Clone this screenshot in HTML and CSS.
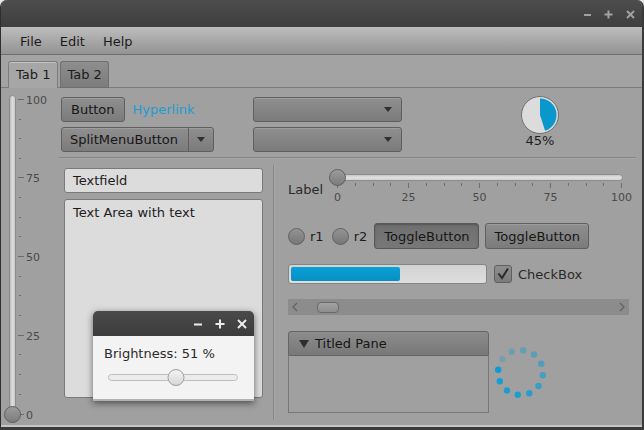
FILE: index.html
```html
<!DOCTYPE html>
<html>
<head>
<meta charset="utf-8">
<link rel="stylesheet" href="styles.css">
</head>
<body>
<div class="window">
  <div class="titlebar">
    <svg class="wctl" width="60" height="27" viewBox="0 0 60 27">
      <g stroke="#a2a2a2" stroke-width="2" fill="none">
        <line x1="3" y1="15" x2="10" y2="15"/>
        <line x1="23.5" y1="14.5" x2="31.5" y2="14.5"/><line x1="27.5" y1="10.5" x2="27.5" y2="18.5"/>
        <line x1="46" y1="11" x2="53" y2="18"/><line x1="53" y1="11" x2="46" y2="18"/>
      </g>
    </svg>
  </div>
  <div class="menubar">
    <span class="menu">File</span><span class="menu">Edit</span><span class="menu">Help</span>
  </div>
  <div class="tabbar">
    <div class="tab sel">Tab 1</div>
    <div class="tab t2">Tab 2</div>
  </div>
  <div class="content">
    <div class="vslider">
      <svg width="60" height="337" viewBox="0 0 60 337">
        <defs>
          <linearGradient id="vtrack" x1="0" y1="0" x2="1" y2="0">
            <stop offset="0" stop-color="#b4b4b4"/><stop offset="0.5" stop-color="#dedede"/><stop offset="1" stop-color="#c4c4c4"/>
          </linearGradient>
          <linearGradient id="thumb" x1="0" y1="0" x2="0" y2="1">
            <stop offset="0" stop-color="#9c9c9c"/><stop offset="1" stop-color="#7b7b7b"/>
          </linearGradient>
        </defs>
        <rect x="8.5" y="7.5" width="6" height="318" rx="3" fill="url(#vtrack)" stroke="#8c8c8c"/>
        <g stroke="#6c6c6c" stroke-width="1">
          <line x1="17" y1="11.5" x2="23" y2="11.5"/>
          <line x1="18" y1="31.5" x2="20" y2="31.5"/>
          <line x1="18" y1="50.5" x2="20" y2="50.5"/>
          <line x1="18" y1="70.5" x2="20" y2="70.5"/>
          <line x1="17" y1="89.5" x2="23" y2="89.5"/>
          <line x1="18" y1="109.5" x2="20" y2="109.5"/>
          <line x1="18" y1="129.5" x2="20" y2="129.5"/>
          <line x1="18" y1="148.5" x2="20" y2="148.5"/>
          <line x1="17" y1="168.5" x2="23" y2="168.5"/>
          <line x1="18" y1="188.5" x2="20" y2="188.5"/>
          <line x1="18" y1="207.5" x2="20" y2="207.5"/>
          <line x1="18" y1="227.5" x2="20" y2="227.5"/>
          <line x1="17" y1="247.5" x2="23" y2="247.5"/>
          <line x1="18" y1="266.5" x2="20" y2="266.5"/>
          <line x1="18" y1="286.5" x2="20" y2="286.5"/>
          <line x1="18" y1="306.5" x2="20" y2="306.5"/>
          <line x1="17" y1="326.5" x2="23" y2="326.5"/>
        </g>
        <g class="ticklabel">
          <text x="25" y="15.5">100</text>
          <text x="25" y="94">75</text>
          <text x="25" y="172.5">50</text>
          <text x="25" y="251.5">25</text>
          <text x="25" y="330.5">0</text>
        </g>
        <circle cx="11.5" cy="326.5" r="8" fill="url(#thumb)" stroke="#5f5f5f"/>
      </svg>
    </div>

    <div class="main">
      <div class="toprow">
        <div class="colA">
          <div class="rowA">
            <div class="btn">Button</div>
            <span class="link">Hyperlink</span>
          </div>
          <div class="split">
            <div class="split-main">SplitMenuButton</div>
            <div class="split-arrow"><i class="caret"></i></div>
          </div>
        </div>
        <div class="colB">
          <div class="combo"><i class="caret"></i></div>
          <div class="combo"><i class="caret"></i></div>
        </div>
        <div class="colC">
          <svg width="40" height="40" viewBox="0 0 40 40">
            <circle cx="20" cy="19" r="18.5" fill="#dcdcdc" stroke="#707070"/>
            <path d="M20 19 L20 2.5 A16.5 16.5 0 0 1 25.1 34.7 Z" fill="#0a98cc"/>
          </svg>
          <div class="pct">45%</div>
        </div>
      </div>
      <div class="hsep"></div>
      <div class="bottom">
        <div class="leftcol">
          <div class="textfield">Textfield</div>
          <div class="textarea">Text Area with text</div>
        </div>
        <div class="vsep"></div>
        <div class="rightcol">
          <div class="r-slider">
            <span class="lbl">Label</span>
            <svg class="hslider" width="308" height="36" viewBox="0 0 308 36">
              <defs>
                <linearGradient id="htrack" x1="0" y1="0" x2="0" y2="1">
                  <stop offset="0" stop-color="#c0c0c0"/><stop offset="0.5" stop-color="#e0e0e0"/><stop offset="1" stop-color="#cfcfcf"/>
                </linearGradient>
                <linearGradient id="thumb2" x1="0" y1="0" x2="0" y2="1">
                  <stop offset="0" stop-color="#9c9c9c"/><stop offset="1" stop-color="#7b7b7b"/>
                </linearGradient>
              </defs>
              <rect x="2.5" y="6.5" width="292" height="6" rx="3" fill="url(#htrack)" stroke="#8c8c8c"/>
              <g stroke="#6c6c6c" stroke-width="1">
                <line x1="9.5" y1="15" x2="9.5" y2="20"/>
                <line x1="27.5" y1="15" x2="27.5" y2="18"/>
                <line x1="45.5" y1="15" x2="45.5" y2="18"/>
                <line x1="62.5" y1="15" x2="62.5" y2="18"/>
                <line x1="80.5" y1="15" x2="80.5" y2="20"/>
                <line x1="98.5" y1="15" x2="98.5" y2="18"/>
                <line x1="116.5" y1="15" x2="116.5" y2="18"/>
                <line x1="133.5" y1="15" x2="133.5" y2="18"/>
                <line x1="151.5" y1="15" x2="151.5" y2="20"/>
                <line x1="169.5" y1="15" x2="169.5" y2="18"/>
                <line x1="187.5" y1="15" x2="187.5" y2="18"/>
                <line x1="204.5" y1="15" x2="204.5" y2="18"/>
                <line x1="222.5" y1="15" x2="222.5" y2="20"/>
                <line x1="240.5" y1="15" x2="240.5" y2="18"/>
                <line x1="258.5" y1="15" x2="258.5" y2="18"/>
                <line x1="275.5" y1="15" x2="275.5" y2="18"/>
                <line x1="293.5" y1="15" x2="293.5" y2="20"/>
              </g>
              <g class="ticklabel" text-anchor="middle">
                <text x="9.5" y="33">0</text>
                <text x="80.5" y="33">25</text>
                <text x="151.5" y="33">50</text>
                <text x="222.5" y="33">75</text>
                <text x="293.5" y="33">100</text>
              </g>
              <circle cx="9.5" cy="9.5" r="8" fill="url(#thumb2)" stroke="#5f5f5f"/>
            </svg>
          </div>

          <div class="r-toggles">
            <span class="radio"></span><span class="rlbl">r1</span>
            <span class="radio"></span><span class="rlbl r2">r2</span>
            <div class="btn toggle on">ToggleButton</div>
            <div class="btn toggle">ToggleButton</div>
          </div>

          <div class="r-progress">
            <div class="pbar"><div class="pfill" style="width:109px"></div></div>
            <div class="check">
              <svg width="14" height="14" viewBox="0 0 14 14"><path d="M2.5 6.5 L6 11 L12 1.5" fill="none" stroke="#2a2a2a" stroke-width="2"/></svg>
            </div>
            <span class="chklbl">CheckBox</span>
          </div>

          <div class="scrollbar">
            <svg class="sarrow" width="8" height="10" viewBox="0 0 8 10"><path d="M6 1 L2 5 L6 9" fill="none" stroke="#636363" stroke-width="1.3"/></svg>
            <div class="sthumb"></div>
            <div class="sfill"></div>
            <svg class="sarrow" width="8" height="10" viewBox="0 0 8 10"><path d="M2 1 L6 5 L2 9" fill="none" stroke="#636363" stroke-width="1.3"/></svg>
          </div>

          <div class="r-titled">
            <div class="titled">
              <div class="thead"><i class="tcaret"></i>Titled Pane</div>
              <div class="tbody"></div>
            </div>
            <svg class="spinner" width="52" height="52" viewBox="0 0 52 52">
              <g fill="#0a9cd6">
                <circle cx="3.2" cy="22.8" r="3.2" opacity="1"/>
                <circle cx="4.8" cy="34.3" r="3.2" opacity="0.92"/>
                <circle cx="12" cy="43.5" r="3.2" opacity="0.9"/>
                <circle cx="22.8" cy="47.8" r="3.2" opacity="0.87"/>
                <circle cx="34.3" cy="46.2" r="3.2" opacity="0.8"/>
                <circle cx="43.5" cy="39" r="3.2" opacity="0.7"/>
                <circle cx="47.8" cy="28.2" r="3.2" opacity="0.6"/>
                <circle cx="46.2" cy="16.7" r="3.2" opacity="0.53"/>
                <circle cx="39" cy="7.5" r="3.2" opacity="0.46"/>
                <circle cx="28.2" cy="3.2" r="3.2" opacity="0.4"/>
                <circle cx="16.7" cy="4.8" r="3.2" opacity="0.34"/>
                <circle cx="7.5" cy="12" r="3.2" opacity="0.28"/>
              </g>
            </svg>
          </div>
        </div>
      </div>
    </div>

    <div class="popup">
      <div class="ptitle">
        <svg width="60" height="25" viewBox="0 0 60 25">
          <g stroke="#ececec" stroke-width="2" fill="none">
            <line x1="4" y1="13.5" x2="12" y2="13.5"/>
            <line x1="25.5" y1="13" x2="34.5" y2="13"/><line x1="30" y1="8.5" x2="30" y2="17.5"/>
            <line x1="48" y1="9" x2="56" y2="17"/><line x1="56" y1="9" x2="48" y2="17"/>
          </g>
        </svg>
      </div>
      <div class="pbody">
        <div class="ptext">Brightness: 51 %</div>
        <svg width="140" height="20" viewBox="0 0 140 20">
          <defs>
            <linearGradient id="pthumb" x1="0" y1="0" x2="0" y2="1">
              <stop offset="0" stop-color="#f4f4f4"/><stop offset="1" stop-color="#d6d6d6"/>
            </linearGradient>
          </defs>
          <rect x="4.5" y="6.5" width="129" height="6" rx="3" fill="#ececec" stroke="#bdbdbd"/>
          <circle cx="72" cy="9.5" r="8" fill="url(#pthumb)" stroke="#9c9c9c"/>
        </svg>
      </div>
    </div>
  </div>
</div>
</body>
</html>
```
FILE: styles.css
```css
* { box-sizing: border-box; margin: 0; padding: 0; }
html, body { width: 644px; height: 430px; overflow: hidden; }
body {
  background: #e6e6e6;
  font-family: "DejaVu Sans", sans-serif;
  font-size: 13px;
  color: #1d1d1d;
}
.window {
  width: 644px;
  height: 430px;
  display: flex;
  flex-direction: column;
  border-left: 1px solid #2e2e2e;
  border-right: 2px solid #3a3a3a;
  border-bottom: 3px solid #3a3a3a;
  border-radius: 7px 7px 0 0;
  overflow: hidden;
  background: #a0a0a0;
}
.titlebar {
  height: 27px;
  flex: none;
  display: flex;
  justify-content: flex-end;
  background: linear-gradient(#4d4d4d, #3e3e3e);
}
.wctl { display: block; margin-right: 1px; }
.menubar {
  height: 28px;
  flex: none;
  display: flex;
  align-items: center;
  padding: 2px 0 0 10px;
  background: linear-gradient(#bdbdbd, #939393);
  border-bottom: 1px solid #6e6e6e;
}
.menu { padding: 0 9px; color: #1c1c1c; }
.tabbar {
  height: 33px;
  flex: none;
  display: flex;
  align-items: flex-end;
  gap: 2px;
  padding-left: 7px;
  background: #a3a3a3;
  box-shadow: inset 0 -1px 0 #7a7a7a;
}
.tab {
  height: 27px;
  line-height: 26px;
  padding: 0 7px;
  border: 1px solid #6f6f6f;
  border-bottom: none;
  border-radius: 3px 3px 0 0;
  background: linear-gradient(#8e8e8e, #7b7b7b);
  box-shadow: inset 0 -1px 0 #6f6f6f;
  color: #1c1c1c;
}
.tab.t2 { padding: 0 6px 0 6px; }
.tab.sel {
  background: #a6a6a6;
  border-color: #7c7c7c;
  box-shadow: inset 0 1px 0 #c4c4c4;
}
.content {
  flex: 1;
  display: flex;
  position: relative;
  border-bottom: 2px solid #c6c6c6;
}
.vslider { width: 60px; flex: none; }
.vslider svg { display: block; }
.ticklabel { font-family: "DejaVu Sans", sans-serif; font-size: 11px; fill: #4a4a4a; }

.main {
  flex: 1;
  display: flex;
  flex-direction: column;
  padding-top: 9px;
}
.toprow { display: flex; height: 55px; }
.colA { width: 192px; display: flex; flex-direction: column; gap: 5px; }
.rowA { display: flex; align-items: center; }
.btn {
  height: 25px;
  display: flex;
  align-items: center;
  padding: 0 9px;
  border: 1px solid #5f5f5f;
  border-radius: 3px;
  background: linear-gradient(#8f8f8f, #7b7b7b);
  box-shadow: inset 0 1px 0 rgba(255,255,255,0.14);
  color: #161616;
}
.link { margin-left: 8px; color: #1e9bd3; }
.split {
  display: flex;
  width: 153px;
  height: 25px;
  border: 1px solid #5f5f5f;
  border-radius: 3px;
  background: linear-gradient(#8f8f8f, #7b7b7b);
  box-shadow: inset 0 1px 0 rgba(255,255,255,0.14);
  color: #161616;
}
.split-main { width: 127px; padding-left: 8px; display: flex; align-items: center; border-right: 1px solid #5f5f5f; }
.split-arrow { flex: 1; display: flex; align-items: center; justify-content: center; }
.caret {
  display: block;
  width: 0;
  height: 0;
  border-left: 4px solid transparent;
  border-right: 4px solid transparent;
  border-top: 5px solid #303030;
}
.colB { width: 149px; display: flex; flex-direction: column; gap: 5px; }
.combo {
  height: 25px;
  display: flex;
  align-items: center;
  justify-content: flex-end;
  padding-right: 9px;
  border: 1px solid #5f5f5f;
  border-radius: 3px;
  background: linear-gradient(#8f8f8f, #7b7b7b);
  box-shadow: inset 0 1px 0 rgba(255,255,255,0.14);
}
.colC {
  margin-left: 116px;
  width: 44px;
  margin-top: -1px;
  display: flex;
  flex-direction: column;
  align-items: center;
}
.colC svg { display: block; }
.pct { margin-top: -3px; line-height: 16px; color: #1d1d1d; }

.hsep {
  height: 2px;
  margin: 5px 6px 0 -2px;
  border-top: 1px solid #868686;
  border-bottom: 1px solid #a6a6a6;
}
.bottom { flex: 1; display: flex; }
.leftcol { width: 199px; margin-left: 3px; padding-top: 9px; display: flex; flex-direction: column; }
.textfield {
  height: 25px;
  padding-left: 8px;
  display: flex;
  align-items: center;
  background: #dcdcdc;
  border: 1px solid #7a7a7a;
  border-radius: 3px;
  color: #1d1d1d;
}
.textarea {
  margin-top: 6px;
  height: 199px;
  padding: 4px 8px;
  line-height: 17px;
  background: #dcdcdc;
  border: 1px solid #7a7a7a;
  border-radius: 3px;
  color: #1d1d1d;
}
.vsep {
  width: 2px;
  height: 255px;
  margin: 6px 0 0 10px;
  border-left: 1px solid #878787;
  border-right: 1px solid #a8a8a8;
}
.rightcol { margin-left: 13px; width: 348px; display: flex; flex-direction: column; padding-top: 9px; }
.r-slider { display: flex; height: 36px; }
.lbl { padding-top: 14px; line-height: 16px; color: #2a2a2a; }
.hslider { display: block; margin-left: 5px; }

.r-toggles { display: flex; align-items: center; margin-top: 19px; height: 26px; }
.radio {
  width: 17px;
  height: 17px;
  border-radius: 50%;
  border: 1px solid #626262;
  background: linear-gradient(#939393, #777777);
}
.rlbl { margin-left: 5px; margin-right: 8px; color: #1d1d1d; }
.rlbl.r2 { margin-right: 7px; }
.toggle { height: 26px; padding: 0 8px 0 9px; }
.toggle.on {
  background: linear-gradient(#6f6f6f, #787878);
  box-shadow: inset 0 1px 2px rgba(0,0,0,0.25);
  border-color: #585858;
  margin-right: 6px;
}

.r-progress { display: flex; align-items: center; margin-top: 15px; height: 20px; }
.pbar {
  width: 199px;
  height: 20px;
  padding: 2px;
  border: 1px solid #858585;
  border-radius: 3px;
  background: linear-gradient(#d2d2d2, #dedede);
}
.pfill { height: 14px; border-radius: 2px; background: linear-gradient(#0aa0d6, #0490c4); }
.check {
  width: 18px;
  height: 18px;
  margin-left: 7px;
  display: flex;
  align-items: center;
  justify-content: center;
  border: 1px solid #5f5f5f;
  border-radius: 3px;
  background: linear-gradient(#8f8f8f, #7b7b7b);
}
.check svg { display: block; }
.chklbl { margin-left: 6px; color: #2a2a2a; }

.scrollbar {
  margin-top: 15px;
  width: 341px;
  height: 16px;
  display: flex;
  align-items: center;
  padding: 0 3px;
  background: #8c8c8c;
}
.sarrow { display: block; flex: none; }
.sthumb {
  width: 22px;
  height: 11px;
  margin-left: 18px;
  border: 1px solid #6a6a6a;
  border-radius: 4px;
  background: linear-gradient(#a2a2a2, #8e8e8e);
}
.sfill { flex: 1; }

.r-titled { display: flex; margin-top: 16px; }
.titled { width: 201px; height: 82px; display: flex; flex-direction: column; }
.thead {
  height: 25px;
  display: flex;
  align-items: center;
  padding-left: 10px;
  border: 1px solid #656565;
  border-radius: 3px 3px 0 0;
  background: linear-gradient(#8c8c8c, #787878);
  color: #161616;
}
.tcaret {
  display: block;
  width: 0;
  height: 0;
  margin-right: 6px;
  border-left: 5px solid transparent;
  border-right: 5px solid transparent;
  border-top: 8px solid #2e2e2e;
}
.tbody { flex: 1; border: 1px solid #777777; border-top: none; }
.spinner { display: block; margin: 16px 0 0 6px; }

.popup {
  position: absolute;
  left: 92px;
  top: 223px;
  width: 161px;
  display: flex;
  flex-direction: column;
  border-radius: 5px 5px 0 0;
  box-shadow: 0 2px 7px rgba(0,0,0,0.55);
}
.ptitle {
  height: 25px;
  display: flex;
  justify-content: flex-end;
  padding-right: 4px;
  border-radius: 5px 5px 0 0;
  background: linear-gradient(#4a4a4a, #3c3c3c);
}
.ptitle svg { display: block; }
.pbody {
  height: 65px;
  padding: 10px 0 0 11px;
  background: #f3f3f3;
  border-bottom: 2px solid #b2b2b2;
}
.ptext { line-height: 16px; color: #2a2a2a; }
.pbody svg { display: block; margin-top: 6px; }
```
